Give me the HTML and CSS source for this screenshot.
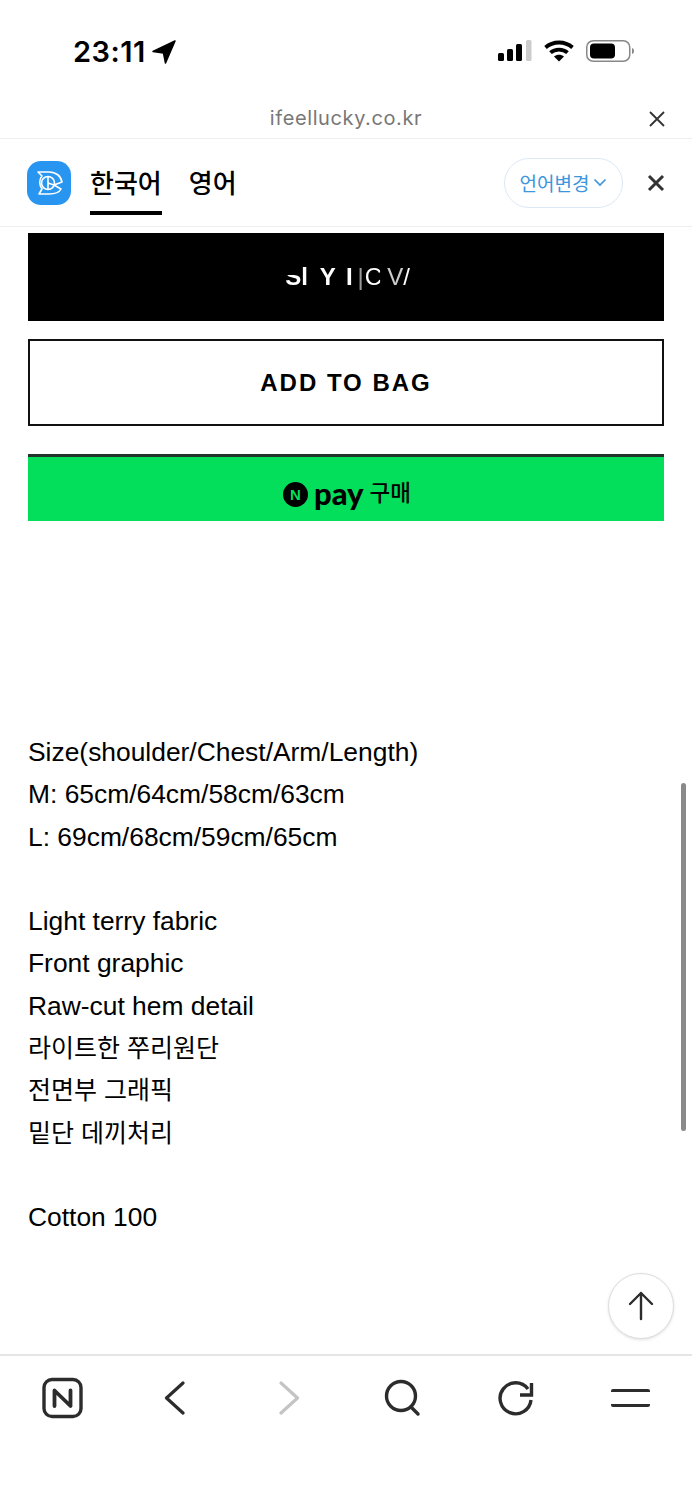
FILE: index.html
```html
<!DOCTYPE html>
<html lang="ko">
<head>
    <meta charset="UTF-8">
    <meta name="viewport" content="width=device-width, initial-scale=1.0">
    <title>ifeellucky.co.kr</title>
    <link rel="stylesheet" href="styles.css">
</head>
<body>
    <div class="page">
        <div class="status-bar">
            <div class="clock">
                <span>23:11</span>
                <svg class="arrow-icon" width="24" height="24" viewBox="0 0 24 24"><path d="M23 1 1 11.500l10.500 1.500L13.500 23z" fill="#000" stroke="#000" stroke-width="1.500" stroke-linejoin="round"/></svg>
            </div>
            <div class="status-icons">
                <svg width="34" height="22" viewBox="0 0 34 22">
                    <rect x="0" y="13" width="6" height="8" rx="1.500" fill="#000"/>
                    <rect x="9" y="9" width="6" height="12" rx="1.500" fill="#000"/>
                    <rect x="18" y="4" width="6" height="17" rx="1.500" fill="#000"/>
                    <rect x="28" y="0" width="5.500" height="21" rx="1.500" fill="#ccc"/>
                </svg>
                <svg width="30" height="22" viewBox="0 0 30 22" fill="none" stroke="#000" stroke-width="3.800">
                    <path d="M1.500 7.500C9 .8 21 .8 28.500 7.500"/>
                    <path d="M6.500 12.700C11 8.500 19 8.500 23.500 12.700"/>
                    <path d="M15 21.500l-5-5c2.800-2.200 7.200-2.200 10 0z" fill="#000" stroke="none"/>
                </svg>
                <svg width="48" height="22" viewBox="0 0 48 22">
                    <rect x="0.750" y="0.750" width="43" height="20.500" rx="6.500" fill="#fff" stroke="#888" stroke-width="1.500"/>
                    <rect x="4" y="3.500" width="25" height="15" rx="4" fill="#000"/>
                    <path d="M46 8c1.500.5 2 1.500 2 3s-.5 2.500-2 3z" fill="#888"/>
                </svg>
            </div>
        </div>

        <div class="url-bar">
            <span class="url-text">ifeellucky.co.kr</span>
            <svg class="url-close" width="16" height="16" viewBox="0 0 16 16"><path d="M1 1l14 14M15 1 1 15" stroke="#333" stroke-width="1.800" fill="none"/></svg>
        </div>

        <div class="translate-bar">
            <svg class="logo" width="44" height="44" viewBox="0 0 44 44">
                <rect width="44" height="44" rx="14" fill="#2896f0"/>
                <g fill="none" stroke="#fff" stroke-width="1.600" stroke-linejoin="round">
                    <path d="M11 11H22C29 11 34 15 35 21L27 24 34 28C32 32 27 33 22 33H12L15 28C12 24 12 18 15 15Z"/>
                    <circle cx="21" cy="22" r="6.500"/>
                    <path d="M21 15.500V28.500M21 22L27 24"/>
                </g>
            </svg>
            <div class="tabs">
                <div class="tab tab-active">한국어</div>
                <div class="tab">영어</div>
            </div>
            <div class="lang-pill">
                <span>언어변경</span>
                <svg width="14" height="9" viewBox="0 0 14 9"><path d="M1.500 1.500 7 7l5.500-5.500" stroke="#3b96dd" stroke-width="1.700" fill="none"/></svg>
            </div>
            <svg class="bar-close" width="18" height="18" viewBox="0 0 18 18"><path d="M2 2l14 14M16 2 2 16" stroke="#333" stroke-width="3" fill="none"/></svg>
        </div>

        <div class="content">
            <div class="btn btn-black">
                <div class="ticker">
                    <span class="tk-s">S</span>
                    <span>l</span>
                    <span class="tk-y">Y</span>
                    <span class="tk-i">I</span>
                    <span class="tk-bar">|</span>
                    <span class="tk-c">C</span>
                    <span class="tk-v">V</span>
                    <span class="tk-slash">/</span>
                </div>
            </div>
            <div class="btn btn-outline">ADD TO BAG</div>
            <div class="btn btn-npay">
                <span class="npay-mark">N</span>
                <span class="npay-word">pay</span>
                <span class="npay-buy">구매</span>
            </div>

            <div class="description">
                <p>Size(shoulder/Chest/Arm/Length)</p>
                <p>M: 65cm/64cm/58cm/63cm</p>
                <p>L: 69cm/68cm/59cm/65cm</p>
                <p>&nbsp;</p>
                <p>Light terry fabric</p>
                <p>Front graphic</p>
                <p>Raw-cut hem detail</p>
                <p class="ko">라이트한 쭈리원단</p>
                <p class="ko">전면부 그래픽</p>
                <p class="ko">밑단 데끼처리</p>
                <p>&nbsp;</p>
                <p>Cotton 100</p>
            </div>

            <div class="scrollbar"></div>
            <div class="to-top">
                <svg width="26" height="30" viewBox="0 0 26 30" fill="none" stroke="#2c2c2c" stroke-width="2.400" stroke-linecap="round" stroke-linejoin="round"><path d="M13 28V2M2 13 13 2l11 11"/></svg>
            </div>
        </div>

        <div class="bottom-nav">
            <div class="nav-item">
                <svg width="42" height="42" viewBox="0 0 42 42" fill="none" stroke="#2c2c2c">
                    <rect x="3" y="2.500" width="37" height="37" rx="8" stroke-width="3.400"/>
                    <path d="M13.500 29V13.500L29.500 29V13.500" stroke-width="3.800" stroke-linejoin="round" stroke-linecap="round"/>
                </svg>
            </div>
            <div class="nav-item">
                <svg width="24" height="34" viewBox="0 0 24 34" fill="none" stroke="#2c2c2c" stroke-width="3.200" stroke-linecap="round" stroke-linejoin="round"><path d="M20 2 3.500 17 20 32"/></svg>
            </div>
            <div class="nav-item">
                <svg width="24" height="34" viewBox="0 0 24 34" fill="none" stroke="#c4c4c4" stroke-width="3.200" stroke-linecap="round" stroke-linejoin="round"><path d="M4 2l16.500 15L4 32"/></svg>
            </div>
            <div class="nav-item">
                <svg width="38" height="38" viewBox="0 0 38 38" fill="none" stroke="#2c2c2c" stroke-width="3.400" stroke-linecap="round"><circle cx="17" cy="17" r="14.500"/><path d="M27 28l7 7"/></svg>
            </div>
            <div class="nav-item">
                <svg width="36" height="36" viewBox="0 0 36 36" fill="none" stroke="#2c2c2c" stroke-width="3.400"><path d="M33 20A15.500 15.500 0 1 1 30 9"/><path d="M33.500 3V15H22"/></svg>
            </div>
            <div class="nav-item">
                <div class="menu-icon"></div>
            </div>
        </div>
    </div>
</body>
</html>
```

FILE: styles.css
```css
* {
    box-sizing: border-box;
}

body {
    margin: 0;
    background-color: #fff;
    font-family: 'Liberation Sans', 'Noto Sans CJK KR', sans-serif;
    color: #000;
}

.page {
    width: 692px;
    height: 1500px;
    display: flex;
    flex-direction: column;
    overflow: hidden;
}

/* status bar */
.status-bar {
    height: 100px;
    flex: none;
    padding: 34px 58px 0 73px;
    display: flex;
    justify-content: space-between;
    align-items: flex-start;
}

.clock {
    display: flex;
    align-items: center;
    gap: 6px;
    font-family: 'Inter', sans-serif;
    font-size: 29px;
    font-weight: 600;
    line-height: 36px;
    letter-spacing: 0.5px;
}

.status-icons {
    display: flex;
    align-items: center;
    gap: 12px;
    padding-top: 6px;
}

/* url row */
.url-bar {
    height: 39px;
    flex: none;
    border-bottom: 1px solid #eee;
    display: flex;
    align-items: center;
    justify-content: center;
    position: relative;
    padding-bottom: 2px;
}

.url-text {
    font-family: 'Inter', sans-serif;
    font-size: 20px;
    letter-spacing: 0.6px;
    color: #777;
}

.url-close {
    position: absolute;
    right: 27px;
    top: 11px;
}

/* translate bar */
.translate-bar {
    height: 88px;
    flex: none;
    border-bottom: 1px solid #eee;
    padding: 0 27px;
    display: flex;
    align-items: center;
}

.logo {
    flex: none;
}

.tabs {
    display: flex;
    gap: 27px;
    margin-left: 19px;
    flex: 1;
    align-self: stretch;
}

.tab {
    height: 76px;
    padding-top: 17px;
    font-family: 'Noto Sans CJK KR', sans-serif;
    font-size: 26px;
    font-weight: 500;
    line-height: 52px;
    border-bottom: 4px solid transparent;
}

.tab-active {
    border-bottom-color: #000;
}

.lang-pill {
    width: 119px;
    height: 50px;
    border: 1.5px solid #dde8f6;
    border-radius: 25px;
    display: flex;
    align-items: center;
    justify-content: center;
    gap: 4px;
    font-family: 'Noto Sans CJK KR', sans-serif;
    font-size: 19px;
    color: #3b96dd;
}

.bar-close {
    margin-left: 24px;
}

/* main column */
.content {
    flex: 1;
    position: relative;
    padding: 6px 28px 0;
}

.btn {
    height: 88px;
    display: flex;
    align-items: center;
    justify-content: center;
}

.btn-black {
    background-color: #000;
    color: #fff;
}

/* letters caught halfway through the button's animation */
.ticker {
    display: flex;
    align-items: center;
    padding-left: 3px;
    font-size: 24px;
    font-weight: bold;
    line-height: 28px;
    filter: blur(0.5px);
}

.tk-s {
    clip-path: inset(12px 0 0 0);
}

.tk-y {
    margin-left: 12px;
}

.tk-i {
    margin-left: 10px;
}

.tk-bar {
    margin-left: 5px;
    font-weight: normal;
    opacity: 0.6;
}

.tk-c {
    margin-left: 1px;
    font-weight: normal;
    clip-path: inset(0 2px 0 0);
}

.tk-v {
    margin-left: 5px;
    font-weight: normal;
    opacity: 0.8;
}

.tk-slash {
    font-weight: normal;
}

.btn-outline {
    margin-top: 18px;
    height: 87px;
    border: 2px solid #111;
    font-size: 24px;
    font-weight: bold;
    letter-spacing: 2px;
}

.btn-npay {
    margin-top: 28px;
    height: 67px;
    padding: 7px 0 0 2px;
    background-color: #03df5a;
    border-top: 3px solid #22352d;
    gap: 6px;
}

.npay-mark {
    width: 25px;
    height: 25px;
    margin-top: 3px;
    border-radius: 50%;
    background-color: #000;
    color: #03df5a;
    font-size: 15px;
    font-weight: bold;
    line-height: 25px;
    text-align: center;
}

.npay-word {
    font-family: 'Lato', sans-serif;
    font-size: 31px;
    font-weight: 900;
    line-height: 30px;
}

.npay-buy {
    margin-bottom: 4px;
    font-family: 'Noto Sans CJK KR', sans-serif;
    font-size: 22.5px;
    font-weight: 500;
}

.description {
    margin-top: 210px;
    font-size: 26.4px;
    line-height: 42.3px;
}

.description p {
    margin: 0;
}

.description .ko {
    font-size: 25px;
}

.scrollbar {
    position: absolute;
    top: 556px;
    left: 681px;
    width: 4.5px;
    height: 348px;
    border-radius: 3px;
    background-color: #8a8a8a;
}

.to-top {
    position: absolute;
    left: 608px;
    top: 1046px;
    width: 66px;
    height: 66px;
    border-radius: 50%;
    background-color: #fff;
    border: 1px solid #ddd;
    box-shadow: 0 1px 3px rgba(0, 0, 0, 0.12);
    display: flex;
    align-items: center;
    justify-content: center;
}

/* bottom toolbar */
.bottom-nav {
    height: 146px;
    flex: none;
    border-top: 2px solid #e5e5e5;
    padding: 21px 5px 0;
    display: grid;
    grid-template-columns: repeat(6, 1fr);
    align-items: start;
}

.nav-item {
    height: 42px;
    display: flex;
    align-items: center;
    justify-content: center;
}

.menu-icon {
    width: 39px;
    height: 18px;
    border-top: 3.5px solid #2c2c2c;
    border-bottom: 3.5px solid #2c2c2c;
    border-radius: 2px;
}
```
